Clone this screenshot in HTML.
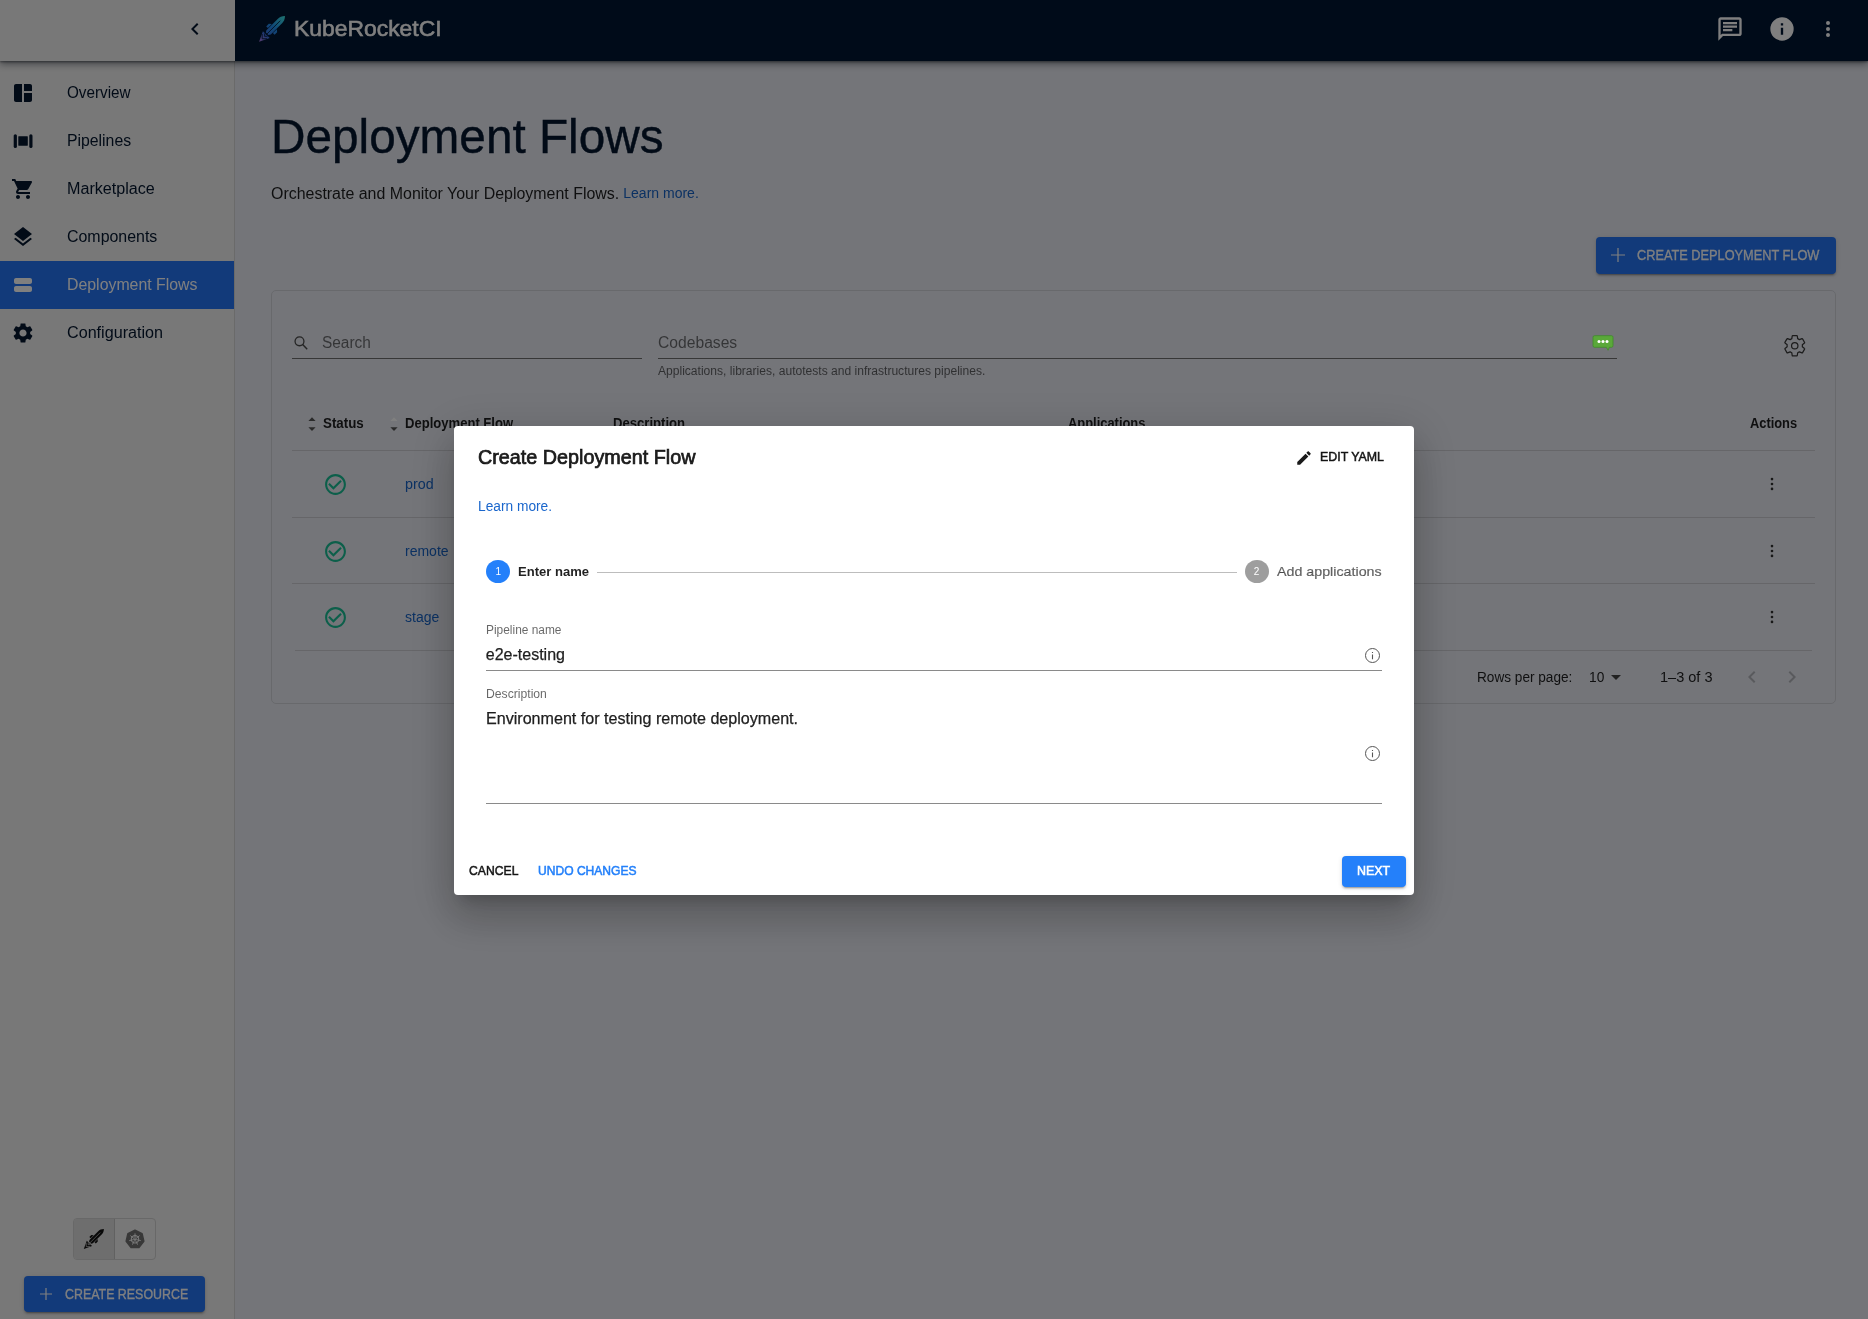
<!DOCTYPE html>
<html lang="en">
<head>
<meta charset="utf-8">
<title>KubeRocketCI - Deployment Flows</title>
<style>
html,body{margin:0;padding:0;}
body{width:1868px;height:1319px;position:relative;overflow:hidden;background:#e8eaf2;font-family:"Liberation Sans",sans-serif;}
.abs{position:absolute;}
.t{position:absolute;white-space:nowrap;transform-origin:0 50%;font-family:"Liberation Sans",sans-serif;}
svg{position:absolute;overflow:visible;}
#page{position:absolute;left:0;top:0;width:1868px;height:1319px;overflow:hidden;will-change:opacity;}
#topbar{left:0;top:0;width:1868px;height:61px;background:#001733;box-shadow:0 3px 7px 0 rgba(0,8,20,.45),0 1px 2px 0 rgba(0,8,20,.4);}
#tbwhite{left:0;top:0;width:235px;height:61px;background:#f0f0f0;}
#sidebar{left:0;top:61px;width:234px;height:1258px;background:#f0f0f0;border-right:1px solid #d4d4d4;}
#navsel{left:0;top:261px;width:234px;height:48px;background:#2474f5;}
#card{left:271px;top:290px;width:1563px;height:412px;border:1px solid #d0d2d8;border-radius:5px;}
.hl{position:absolute;height:1px;}
.btn{position:absolute;border-radius:4px;background:#2474f5;box-shadow:0 3px 1px -2px rgba(0,0,0,.2),0 2px 2px 0 rgba(0,0,0,.14),0 1px 5px 0 rgba(0,0,0,.12);}
#backdrop{left:0;top:0;width:1868px;height:1319px;background:rgba(0,0,0,0.5);}
#dialog{left:454px;top:426px;width:960px;height:468.6px;background:#fff;border-radius:4px;box-shadow:0 11px 15px -7px rgba(0,0,0,.2),0 24px 38px 3px rgba(0,0,0,.14),0 9px 46px 8px rgba(0,0,0,.12);}
#dlgtext{position:absolute;left:0;top:0;width:1868px;height:1319px;will-change:opacity;}
</style>
</head>
<body>
<div id="page">
  <nav id="sidebar" class="abs"></nav>
  <div id="navsel" class="abs"></div>
  <header id="topbar" class="abs"></header>
  <div id="tbwhite" class="abs"></div>

  <!-- collapse chevron -->
  <svg style="left:183px;top:17px" width="24" height="24" viewBox="0 0 24 24"><path fill="#04162e" d="M15.41,16.58L10.83,12L15.41,7.41L14,6L8,12L14,18L15.41,16.58Z"/></svg>

  <!-- logo rocket -->
  <svg style="left:254px;top:10px" width="40" height="38" viewBox="0 0 40 38">
    <defs><linearGradient id="lg" gradientUnits="userSpaceOnUse" x1="0" y1="-18" x2="0" y2="18"><stop offset="0" stop-color="#3ee6e0"/><stop offset="0.45" stop-color="#1f8ff0"/><stop offset="0.75" stop-color="#3f6fe0"/><stop offset="1" stop-color="#b07ae0"/></linearGradient></defs>
    <g transform="translate(18.1,18.85) rotate(45)">
      <path fill="url(#lg)" d="M0,-18.2 C2.2,-16 3.1,-13.5 3.1,-11 L3.1,5 L1.8,7 L-1.8,7 L-3.1,5 L-3.1,-11 C-3.1,-13.5 -2.2,-16 0,-18.2Z M-3.6,-3.2 L-5.9,-1.2 L-5.9,2.4 L-3.6,2.4Z M3.6,-3.2 L5.9,-1.2 L5.9,2.4 L3.6,2.4Z M-4.8,8.2 L4.8,8.2 L0,18.4Z"/>
      <path fill="none" stroke="#001733" stroke-width="0.8" d="M0,-11.5V8.5 M-3.4,10.6 L0,14 L3.4,10.6 M-2,8.4 L0,10.6 L2,8.4"/>
    </g>
  </svg>

  <!-- topbar right icons -->
  <svg style="left:1716px;top:15px" width="28" height="28" viewBox="0 0 24 24"><path fill="#fff" d="M4 4h16v12H5.17L4 17.17V4m0-2c-1.1 0-1.99.9-1.99 2L2 22l4-4h14c1.1 0 2-.9 2-2V4c0-1.1-.9-2-2-2H4zm2 10h8v2H6v-2zm0-3h12v2H6V9zm0-3h12v2H6V6z"/></svg>
  <svg style="left:1768px;top:15px" width="28" height="28" viewBox="0 0 24 24"><path fill="#fff" d="M13,9H11V7H13M13,17H11V11H13M12,2A10,10 0 0,0 2,12A10,10 0 0,0 12,22A10,10 0 0,0 22,12A10,10 0 0,0 12,2Z"/></svg>
  <svg style="left:1816px;top:17px" width="24" height="24" viewBox="0 0 24 24"><path fill="#fff" d="M12,16A2,2 0 0,1 14,18A2,2 0 0,1 12,20A2,2 0 0,1 10,18A2,2 0 0,1 12,16M12,10A2,2 0 0,1 14,12A2,2 0 0,1 12,14A2,2 0 0,1 10,12A2,2 0 0,1 12,10M12,4A2,2 0 0,1 14,6A2,2 0 0,1 12,8A2,2 0 0,1 10,6A2,2 0 0,1 12,4Z"/></svg>

  <!-- sidebar icons -->
  <svg style="left:11px;top:81px" width="24" height="24" viewBox="0 0 24 24"><path fill="#04162e" d="M11 21H5c-1.1 0-2-.9-2-2V5c0-1.1.9-2 2-2h6v18zm2 0h6c1.1 0 2-.9 2-2v-7h-8v9zm8-11V5c0-1.1-.9-2-2-2h-6v7h8z"/></svg>
  <svg style="left:11px;top:129px" width="24" height="24" viewBox="0 0 24 24"><g fill="#04162e"><rect x="2.7" y="5.2" width="3.2" height="13.8" rx="1.6"/><rect x="18.3" y="5.2" width="3.2" height="13.8" rx="1.6"/><rect x="7.3" y="7.3" width="9.5" height="9.4" rx="0.4"/></g></svg>
  <svg style="left:11px;top:177px" width="24" height="24" viewBox="0 0 24 24"><path fill="#04162e" d="M7 18c-1.1 0-1.99.9-1.99 2S5.9 22 7 22s2-.9 2-2-.9-2-2-2zM1 2v2h2l3.6 7.59-1.35 2.45c-.16.28-.25.61-.25.96 0 1.1.9 2 2 2h12v-2H7.42c-.14 0-.25-.11-.25-.25l.03-.12.9-1.63h7.45c.75 0 1.41-.41 1.75-1.03l3.58-6.49c.08-.14.12-.31.12-.48 0-.55-.45-1-1-1H5.21l-.94-2H1zm16 16c-1.1 0-1.99.9-1.99 2s.89 2 1.99 2 2-.9 2-2-.9-2-2-2z"/></svg>
  <svg style="left:11px;top:225px" width="24" height="24" viewBox="0 0 24 24"><path fill="#04162e" d="M11.99 18.54l-7.37-5.73L3 14.07l9 7 9-7-1.63-1.27-7.38 5.74zM12 16l7.36-5.73L21 9l-9-7-9 7 1.63 1.27L12 16z"/></svg>
  <svg style="left:11px;top:273px" width="24" height="24" viewBox="0 0 24 24"><path fill="#fff" d="M3 17v-2c0-1.1.9-2 2-2h14c1.1 0 2 .9 2 2v2c0 1.1-.9 2-2 2H5c-1.1 0-2-.9-2-2zM3 7v2c0 1.1.9 2 2 2h14c1.1 0 2-.9 2-2V7c0-1.1-.9-2-2-2H5c-1.1 0-2 .9-2 2z"/></svg>
  <svg style="left:11px;top:321px" width="24" height="24" viewBox="0 0 24 24"><path fill="#04162e" d="M19.14 12.94c.04-.3.06-.61.06-.94 0-.32-.02-.64-.07-.94l2.03-1.58c.18-.14.23-.41.12-.61l-1.92-3.32c-.12-.22-.37-.29-.59-.22l-2.39.96c-.5-.38-1.03-.7-1.62-.94l-.36-2.54c-.04-.24-.24-.41-.48-.41h-3.84c-.24 0-.43.17-.47.41l-.36 2.54c-.59.24-1.13.57-1.62.94l-2.39-.96c-.22-.08-.47 0-.59.22L2.74 8.87c-.12.21-.08.47.12.61l2.03 1.58c-.05.3-.09.63-.09.94s.02.64.07.94l-2.03 1.58c-.18.14-.23.41-.12.61l1.92 3.32c.12.22.37.29.59.22l2.39-.96c.5.38 1.03.7 1.62.94l.36 2.54c.05.24.24.41.48.41h3.84c.24 0 .44-.17.47-.41l.36-2.54c.59-.24 1.13-.56 1.62-.94l2.39.96c.22.08.47 0 .59-.22l1.92-3.32c.12-.22.07-.47-.12-.61l-2.01-1.58zM12 15.6c-1.98 0-3.6-1.62-3.6-3.6s1.62-3.6 3.6-3.6 3.6 1.62 3.6 3.6-1.62 3.6-3.6 3.6z"/></svg>

  <!-- sidebar bottom toggle -->
  <div class="abs" style="left:73px;top:1218px;width:81px;height:40px;border:1px solid #d0d0d0;border-radius:4px;"></div>
  <div class="abs" style="left:74px;top:1219px;width:40px;height:40px;background:#dcdcdc;border-right:1px solid #c2c2c2;border-radius:3px 0 0 3px;"></div>
  <svg style="left:79px;top:1224px" width="30" height="30" viewBox="0 0 30 30"><g transform="translate(14.9,14.9) rotate(45) scale(0.775)"><path fill="#111" d="M0,-18.2 C2.2,-16 3.1,-13.5 3.1,-11 L3.1,5 L1.8,7 L-1.8,7 L-3.1,5 L-3.1,-11 C-3.1,-13.5 -2.2,-16 0,-18.2Z M-3.6,-3.2 L-5.9,-1.2 L-5.9,2.4 L-3.6,2.4Z M3.6,-3.2 L5.9,-1.2 L5.9,2.4 L3.6,2.4Z M-4.8,8.2 L4.8,8.2 L0,18.4Z"/><path fill="none" stroke="#dcdcdc" stroke-width="0.8" d="M0,-11.5V8.5 M-3.4,10.6 L0,14 L3.4,10.6 M-2,8.4 L0,10.6 L2,8.4"/></g></svg>
  <svg style="left:123.6px;top:1227.6px" width="22" height="22" viewBox="0 0 22 22"><path fill="#707070" stroke="#707070" stroke-width="1.6" stroke-linejoin="round" d="M11.00,2.30 L18.04,5.69 L19.77,13.30 L14.90,19.41 L7.10,19.41 L2.23,13.30 L3.96,5.69Z"/><circle cx="11" cy="11.3" r="3.7" fill="none" stroke="#f0f0f0" stroke-width="1.1"/><path stroke="#f0f0f0" stroke-width="1" fill="none" d="M11.00,10.10L11.00,5.40M11.94,10.55L15.61,7.62M12.17,11.57L16.75,12.61M11.52,12.38L13.56,16.62M10.48,12.38L8.44,16.62M9.83,11.57L5.25,12.61M10.06,10.55L6.39,7.62"/><circle cx="11" cy="11.3" r="1.1" fill="#f0f0f0"/></svg>

  <!-- create resource button -->
  <div class="btn" style="left:24px;top:1276px;width:181px;height:36px;"></div>
  <svg style="left:38px;top:1286px" width="16" height="16" viewBox="0 0 16 16"><path stroke="#fff" stroke-width="1.2" fill="none" d="M8 2V14M2 8H14"/></svg>

  <!-- create deployment flow button -->
  <div class="btn" style="left:1596px;top:237px;width:240px;height:36.5px;"></div>
  <svg style="left:1610px;top:247px" width="16" height="16" viewBox="0 0 16 16"><path stroke="#fff" stroke-width="1.2" fill="none" d="M8 1V15M1 8H15"/></svg>

  <!-- card -->
  <div id="card" class="abs"></div>
  <!-- search -->
  <svg style="left:290px;top:332px" width="20" height="20" viewBox="0 0 20 20"><circle cx="9.5" cy="9.3" r="4.45" fill="none" stroke="#4a4a4a" stroke-width="1.3"/><path d="M12.7 12.5L17.2 17.3" stroke="#4a4a4a" stroke-width="1.4" fill="none"/></svg>
  <div class="hl" style="left:292px;top:357.5px;width:350px;background:#6e6e6e;"></div>
  <div class="hl" style="left:658px;top:357.5px;width:959px;background:#6e6e6e;"></div>
  <!-- gear outline -->
  <svg style="left:1782.2px;top:333.2px" width="25.5" height="25.5" viewBox="0 0 24 24"><path fill="none" stroke="#383838" stroke-width="1.15" stroke-linejoin="round" d="M19.14 12.94c.04-.3.06-.61.06-.94 0-.32-.02-.64-.07-.94l2.03-1.58c.18-.14.23-.41.12-.61l-1.92-3.32c-.12-.22-.37-.29-.59-.22l-2.39.96c-.5-.38-1.03-.7-1.62-.94l-.36-2.54c-.04-.24-.24-.41-.48-.41h-3.84c-.24 0-.43.17-.47.41l-.36 2.54c-.59.24-1.13.57-1.62.94l-2.39-.96c-.22-.08-.47 0-.59.22L2.74 8.87c-.12.21-.08.47.12.61l2.03 1.58c-.05.3-.09.63-.09.94s.02.64.07.94l-2.03 1.58c-.18.14-.23.41-.12.61l1.92 3.32c.12.22.37.29.59.22l2.39-.96c.5.38 1.03.7 1.62.94l.36 2.54c.05.24.24.41.48.41h3.84c.24 0 .44-.17.47-.41l.36-2.54c.59-.24 1.13-.56 1.62-.94l2.39.96c.22.08.47 0 .59-.22l1.92-3.32c.12-.22.07-.47-.12-.61l-2.01-1.58z"/><circle cx="12" cy="12" r="3" fill="none" stroke="#383838" stroke-width="1.15"/></svg>

  <!-- sort arrows -->
  <svg style="left:306.8px;top:416px" width="10" height="16" viewBox="0 0 10 16"><path fill="#555" d="M5 1.2L8.6 4.9H1.4zM5 14.9L1.4 11.2H8.6z"/></svg>
  <svg style="left:388.7px;top:416px" width="10" height="16" viewBox="0 0 10 16"><path fill="#ffffff" d="M5 1.2L8.6 4.9H1.4z"/><path fill="#555" d="M5 14.9L1.4 11.2H8.6z"/></svg>

  <!-- table lines -->
  <div class="hl" style="left:292px;top:450px;width:1523px;background:#cccdd3;"></div>
  <div class="hl" style="left:292px;top:517px;width:1523px;background:#cccdd3;"></div>
  <div class="hl" style="left:292px;top:583px;width:1523px;background:#cccdd3;"></div>
  <div class="hl" style="left:295px;top:650px;width:1517px;background:#cccdd3;"></div>

  <!-- status icons -->
  <svg style="left:323px;top:472px" width="25" height="25" viewBox="0 0 24 24"><path fill="#18be94" d="M16.59 7.58L10 14.17l-3.59-3.58L5 12l5 5 8-8zM12 2C6.48 2 2 6.48 2 12s4.48 10 10 10 10-4.48 10-10S17.52 2 12 2zm0 18c-4.42 0-8-3.58-8-8s3.58-8 8-8 8 3.58 8 8-3.58 8-8 8z"/></svg>
  <svg style="left:323px;top:538.5px" width="25" height="25" viewBox="0 0 24 24"><path fill="#18be94" d="M16.59 7.58L10 14.17l-3.59-3.58L5 12l5 5 8-8zM12 2C6.48 2 2 6.48 2 12s4.48 10 10 10 10-4.48 10-10S17.52 2 12 2zm0 18c-4.42 0-8-3.58-8-8s3.58-8 8-8 8 3.58 8 8-3.58 8-8 8z"/></svg>
  <svg style="left:323px;top:605px" width="25" height="25" viewBox="0 0 24 24"><path fill="#18be94" d="M16.59 7.58L10 14.17l-3.59-3.58L5 12l5 5 8-8zM12 2C6.48 2 2 6.48 2 12s4.48 10 10 10 10-4.48 10-10S17.52 2 12 2zm0 18c-4.42 0-8-3.58-8-8s3.58-8 8-8 8 3.58 8 8-3.58 8-8 8z"/></svg>

  <!-- row action dots -->
  <svg style="left:1766px;top:474px" width="12" height="20" viewBox="0 0 12 20"><g fill="#303030"><circle cx="6" cy="5.1" r="1.3"/><circle cx="6" cy="10" r="1.3"/><circle cx="6" cy="14.9" r="1.3"/></g></svg>
  <svg style="left:1766px;top:541px" width="12" height="20" viewBox="0 0 12 20"><g fill="#303030"><circle cx="6" cy="5.1" r="1.3"/><circle cx="6" cy="10" r="1.3"/><circle cx="6" cy="14.9" r="1.3"/></g></svg>
  <svg style="left:1766px;top:607px" width="12" height="20" viewBox="0 0 12 20"><g fill="#303030"><circle cx="6" cy="5.1" r="1.3"/><circle cx="6" cy="10" r="1.3"/><circle cx="6" cy="14.9" r="1.3"/></g></svg>

  <!-- pagination icons -->
  <svg style="left:1604px;top:665px" width="24" height="24" viewBox="0 0 24 24"><path fill="#444" d="M7 10l5 5 5-5z"/></svg>
  <svg style="left:1740px;top:665px" width="24" height="24" viewBox="0 0 24 24"><path fill="#b3b5ba" d="M15.41 7.41L14 6l-6 6 6 6 1.41-1.41L10.83 12z"/></svg>
  <svg style="left:1780px;top:665px" width="24" height="24" viewBox="0 0 24 24"><path fill="#b3b5ba" d="M10 6L8.59 7.41 13.17 12l-4.58 4.59L10 18l6-6z"/></svg>

<span class="t" id="logo" style="left:293.74px;top:11.72px;font-size:21.7px;line-height:33px;color:#ffffff;transform:scaleX(1.0551);-webkit-text-stroke:0.55px #fff;">KubeRocketCI</span>
<span class="t" id="nav0" style="left:67.30px;top:80.76px;font-size:16px;line-height:24px;color:#04162e;transform:scaleX(0.9534);">Overview</span>
<span class="t" id="nav1" style="left:67.21px;top:128.76px;font-size:16px;line-height:24px;color:#04162e;transform:scaleX(0.9870);">Pipelines</span>
<span class="t" id="nav2" style="left:67.19px;top:176.76px;font-size:16px;line-height:24px;color:#04162e;transform:scaleX(1.0075);">Marketplace</span>
<span class="t" id="nav3" style="left:67.30px;top:224.76px;font-size:16px;line-height:24px;color:#04162e;transform:scaleX(0.9954);">Components</span>
<span class="t" id="nav4" style="left:67.21px;top:272.76px;font-size:16px;line-height:24px;color:#ffffff;transform:scaleX(0.9916);">Deployment Flows</span>
<span class="t" id="nav5" style="left:67.30px;top:320.76px;font-size:16px;line-height:24px;color:#04162e;transform:scaleX(1.0088);">Configuration</span>
<span class="t" id="cres" style="left:64.50px;top:1282.85px;font-size:14.5px;line-height:22px;color:#ffffff;transform:scaleX(0.8560);-webkit-text-stroke:0.3px #fff;">CREATE RESOURCE</span>
<span class="t" id="h1" style="left:270.79px;top:101.08px;font-size:47.6px;line-height:71px;color:#04162e;transform:scaleX(1.0029);-webkit-text-stroke:0.4px #04162e;">Deployment Flows</span>
<span class="t" id="sub" style="left:271.30px;top:181.56px;font-size:16px;line-height:24px;color:rgba(0,0,0,0.87);transform:scaleX(0.9964);">Orchestrate and Monitor Your Deployment Flows.</span>
<span class="t" id="lm1" style="left:623.30px;top:183.34px;font-size:14px;line-height:21px;color:#1763c6;">Learn more.</span>
<span class="t" id="cdf" style="left:1636.80px;top:244.05px;font-size:14.5px;line-height:22px;color:#ffffff;transform:scaleX(0.8797);-webkit-text-stroke:0.3px #fff;">CREATE DEPLOYMENT FLOW</span>
<span class="t" id="srch" style="left:322.00px;top:331.36px;font-size:16px;line-height:24px;color:rgba(0,0,0,0.55);transform:scaleX(0.9639);">Search</span>
<span class="t" id="cb" style="left:658.00px;top:331.36px;font-size:16px;line-height:24px;color:rgba(0,0,0,0.55);transform:scaleX(0.9784);">Codebases</span>
<span class="t" id="help" style="left:658.00px;top:362.02px;font-size:12px;line-height:18px;color:rgba(0,0,0,0.6);transform:scaleX(1.0056);">Applications, libraries, autotests and infrastructures pipelines.</span>
<span class="t" id="th0" style="left:322.50px;top:412.84px;font-size:14px;line-height:21px;color:rgba(0,0,0,0.87);transform:scaleX(0.9512);font-weight:700;">Status</span>
<span class="t" id="th1" style="left:404.80px;top:412.84px;font-size:14px;line-height:21px;color:rgba(0,0,0,0.87);transform:scaleX(0.9327);font-weight:700;">Deployment Flow</span>
<span class="t" id="th2" style="left:613.30px;top:412.84px;font-size:14px;line-height:21px;color:rgba(0,0,0,0.87);transform:scaleX(0.9351);font-weight:700;">Description</span>
<span class="t" id="th3" style="left:1068.00px;top:412.84px;font-size:14px;line-height:21px;color:rgba(0,0,0,0.87);transform:scaleX(0.9214);font-weight:700;">Applications</span>
<span class="t" id="th4" style="left:1750.30px;top:412.84px;font-size:14px;line-height:21px;color:rgba(0,0,0,0.87);transform:scaleX(0.9175);font-weight:700;">Actions</span>
<span class="t" id="r0" style="left:405.00px;top:474.24px;font-size:14px;line-height:21px;color:#1763c6;transform:scaleX(1.0208);">prod</span>
<span class="t" id="r1" style="left:405.00px;top:540.84px;font-size:14px;line-height:21px;color:#1763c6;">remote</span>
<span class="t" id="r2" style="left:405.00px;top:607.44px;font-size:14px;line-height:21px;color:#1763c6;">stage</span>
<span class="t" id="rpp" style="left:1477.43px;top:666.84px;font-size:14px;line-height:21px;color:rgba(0,0,0,0.87);transform:scaleX(0.9723);">Rows per page:</span>
<span class="t" id="ten" style="left:1588.52px;top:666.84px;font-size:14px;line-height:21px;color:rgba(0,0,0,0.87);transform:scaleX(0.9806);">10</span>
<span class="t" id="rng" style="left:1660.26px;top:666.84px;font-size:14px;line-height:21px;color:rgba(0,0,0,0.87);transform:scaleX(1.0379);">1–3 of 3</span>
</div>

<div id="backdrop" class="abs"></div>

<!-- extension bubble (not dimmed) -->
<svg style="left:1592px;top:334px" width="22" height="19" viewBox="0 0 22 18"><path fill="#5aa83a" stroke="#3f8a2a" stroke-width="0.8" d="M2.5 1.2h17a1.5 1.5 0 0 1 1.5 1.5v8.6a1.5 1.5 0 0 1 -1.5 1.5h-2.2l-1.2 3-1.8-3H2.5a1.5 1.5 0 0 1 -1.5 -1.5V2.7a1.5 1.5 0 0 1 1.5 -1.5z"/><circle cx="7" cy="7" r="1.5" fill="#fff"/><circle cx="11" cy="7" r="1.5" fill="#fff"/><circle cx="15" cy="7" r="1.5" fill="#fff"/></svg>

<div id="dialog" class="abs" role="dialog"></div>
<div id="dlgtext">
  <!-- pencil -->
  <svg style="left:1294.6px;top:448.9px" width="18" height="18" viewBox="0 0 24 24"><path fill="#1a1a1a" d="M3 17.25V21h3.75L17.81 9.94l-3.75-3.75L3 17.25zM20.71 7.04c.39-.39.39-1.02 0-1.41l-2.34-2.34c-.39-.39-1.02-.39-1.41 0l-1.83 1.83 3.75 3.75 1.83-1.83z"/></svg>
  <!-- stepper -->
  <div class="abs" style="left:486px;top:560px;width:24px;height:23.3px;border-radius:50%;background:#2480fa;"></div>
  <div class="hl" style="left:597px;top:571.5px;width:640px;background:#bdbdbd;"></div>
  <div class="abs" style="left:1245px;top:560px;width:24px;height:23.3px;border-radius:50%;background:#9e9e9e;"></div>
  <!-- inputs -->
  <div class="hl" style="left:486px;top:670px;width:896px;background:#8a8a8a;"></div>
  <div class="hl" style="left:486px;top:802.5px;width:896px;background:#8a8a8a;"></div>
  <svg style="left:1364.2px;top:646.6px" width="17" height="17" viewBox="0 0 17 17"><circle cx="8.5" cy="8.5" r="7" fill="none" stroke="#555" stroke-width="1"/><path stroke="#555" stroke-width="1.1" d="M8.5 7.5V12.2M8.5 4.9V6.1"/></svg>
  <svg style="left:1364.2px;top:744.8px" width="17" height="17" viewBox="0 0 17 17"><circle cx="8.5" cy="8.5" r="7" fill="none" stroke="#555" stroke-width="1"/><path stroke="#555" stroke-width="1.1" d="M8.5 7.5V12.2M8.5 4.9V6.1"/></svg>
  <!-- next button -->
  <div class="btn" style="left:1342px;top:856px;width:64px;height:30.75px;background:#2480fa;"></div>
<span class="t" id="dt" style="left:478.01px;top:442.10px;font-size:20px;line-height:30px;color:rgba(0,0,0,0.87);transform:scaleX(0.9880);-webkit-text-stroke:0.7px rgba(0,0,0,0.87);">Create Deployment Flow</span>
<span class="t" id="ey" style="left:1320.28px;top:446.63px;font-size:13.4px;line-height:20px;color:rgba(0,0,0,0.87);transform:scaleX(0.9246);-webkit-text-stroke:0.55px rgba(0,0,0,0.87);">EDIT YAML</span>
<span class="t" id="lm2" style="left:478.12px;top:495.84px;font-size:14px;line-height:21px;color:#1a66cc;transform:scaleX(0.9811);">Learn more.</span>
<span class="t" id="s1n" style="left:495.60px;top:564.20px;font-size:10px;line-height:15px;color:#ffffff;">1</span>
<span class="t" id="s1" style="left:517.60px;top:562.83px;font-size:12.6px;line-height:19px;color:rgba(0,0,0,0.87);transform:scaleX(1.0352);font-weight:700;">Enter name</span>
<span class="t" id="s2n" style="left:1253.80px;top:564.20px;font-size:10px;line-height:15px;color:#ffffff;">2</span>
<span class="t" id="s2" style="left:1276.70px;top:562.63px;font-size:12.6px;line-height:19px;color:rgba(0,0,0,0.6);transform:scaleX(1.1322);-webkit-text-stroke:0.2px rgba(0,0,0,0.6);">Add applications</span>
<span class="t" id="pl" style="left:486.30px;top:621.32px;font-size:12px;line-height:18px;color:rgba(0,0,0,0.6);transform:scaleX(0.9925);">Pipeline name</span>
<span class="t" id="pv" style="left:485.80px;top:642.76px;font-size:16px;line-height:24px;color:rgba(0,0,0,0.87);-webkit-text-stroke:0.25px rgba(0,0,0,0.87);">e2e-testing</span>
<span class="t" id="dl" style="left:486.30px;top:685.12px;font-size:12px;line-height:18px;color:rgba(0,0,0,0.6);transform:scaleX(1.0143);">Description</span>
<span class="t" id="dv" style="left:486.49px;top:706.96px;font-size:16px;line-height:24px;color:rgba(0,0,0,0.87);transform:scaleX(1.0054);-webkit-text-stroke:0.25px rgba(0,0,0,0.87);">Environment for testing remote deployment.</span>
<span class="t" id="cn" style="left:468.90px;top:860.53px;font-size:13.4px;line-height:20px;color:rgba(0,0,0,0.87);transform:scaleX(0.9095);-webkit-text-stroke:0.55px rgba(0,0,0,0.87);">CANCEL</span>
<span class="t" id="uc" style="left:537.60px;top:860.53px;font-size:13.4px;line-height:20px;color:#2480fa;transform:scaleX(0.9010);-webkit-text-stroke:0.55px #2480fa;">UNDO CHANGES</span>
<span class="t" id="nx" style="left:1356.67px;top:860.53px;font-size:13.4px;line-height:20px;color:#ffffff;transform:scaleX(0.9295);-webkit-text-stroke:0.55px #fff;">NEXT</span>
</div>
</body>
</html>
